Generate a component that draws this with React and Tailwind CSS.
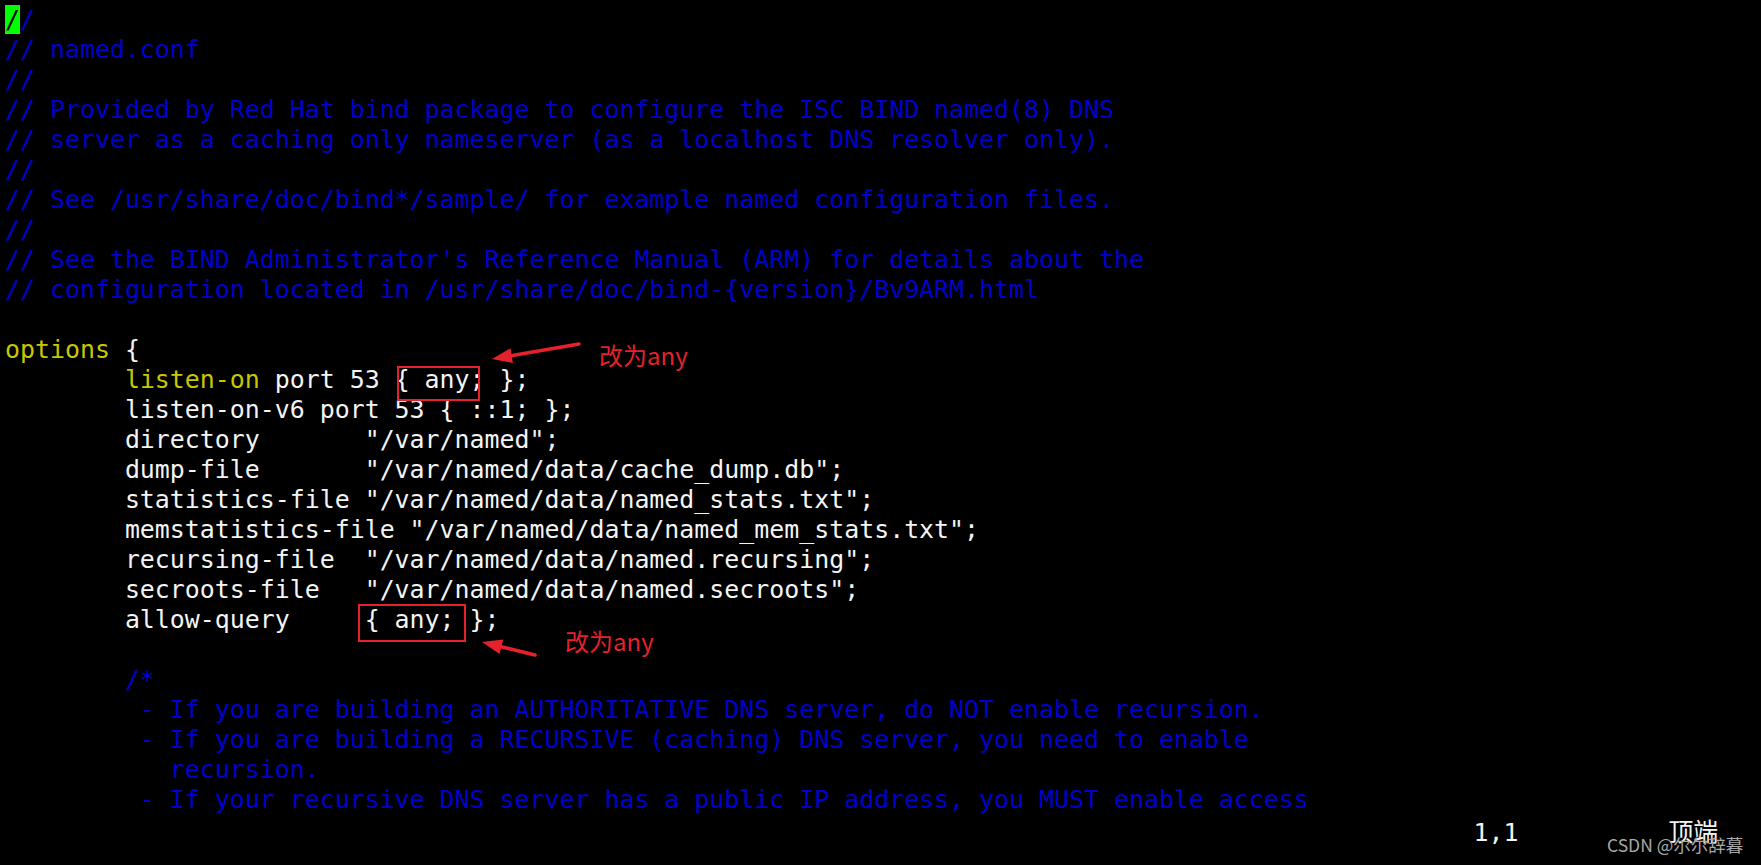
import React from "react";

const B = "text-[#0000cd]";
const Y = "text-[#c8c800]";
const W = "text-[#f4f4f4]";

const lines = [
  [["//", B, true]],
  [["// named.conf", B]],
  [["//", B]],
  [["// Provided by Red Hat bind package to configure the ISC BIND named(8) DNS", B]],
  [["// server as a caching only nameserver (as a localhost DNS resolver only).", B]],
  [["//", B]],
  [["// See /usr/share/doc/bind*/sample/ for example named configuration files.", B]],
  [["//", B]],
  [["// See the BIND Administrator's Reference Manual (ARM) for details about the", B]],
  [["// configuration located in /usr/share/doc/bind-{version}/Bv9ARM.html", B]],
  [["", W]],
  [["options", Y], [" {", W]],
  [["        ", W], ["listen-on", Y], [" port 53 { any; };", W]],
  [["        listen-on-v6 port 53 { ::1; };", W]],
  [['        directory       "/var/named";', W]],
  [['        dump-file       "/var/named/data/cache_dump.db";', W]],
  [['        statistics-file "/var/named/data/named_stats.txt";', W]],
  [['        memstatistics-file "/var/named/data/named_mem_stats.txt";', W]],
  [['        recursing-file  "/var/named/data/named.recursing";', W]],
  [['        secroots-file   "/var/named/data/named.secroots";', W]],
  [["        allow-query     { any; };", W]],
  [["", W]],
  [["        /*", B]],
  [["         - If you are building an AUTHORITATIVE DNS server, do NOT enable recursion.", B]],
  [["         - If you are building a RECURSIVE (caching) DNS server, you need to enable", B]],
  [["           recursion.", B]],
  [["         - If your recursive DNS server has a public IP address, you MUST enable access", B]],
];

function Line({ segs }) {
  return (
    <div className="h-[30px] whitespace-pre">
      {segs.map(([t, c, cursor], i) =>
        cursor ? (
          <span key={i} className={c}>
            <span className="bg-[#00ff00] text-black">{t[0]}</span>
            {t.slice(1)}
          </span>
        ) : (
          <span key={i} className={c}>
            {t}
          </span>
        )
      )}
    </div>
  );
}

export default function App() {
  return (
    <div className="relative w-[1761px] h-[865px] bg-black overflow-hidden">
      <div className="pt-[5px] pl-[5px] font-['DejaVu_Sans_Mono',monospace] text-[24.9px] leading-[30px]">
        {lines.map((segs, i) => (
          <Line key={i} segs={segs} />
        ))}
        <div className="h-[30px] whitespace-pre text-[#f4f4f4]">
          {" ".repeat(98)}
          <span>1,1</span>
          {" ".repeat(10)}
          <span className="font-['Noto_Sans_CJK_SC',serif]">顶端</span>
        </div>
      </div>

      {/* annotation boxes */}
      <div className="absolute left-[397px] top-[366px] w-[83px] h-[35px] border-2 border-[#e5222b]" />
      <div className="absolute left-[358px] top-[604px] w-[108px] h-[38px] border-2 border-[#e5222b]" />

      {/* arrows */}
      <svg className="absolute left-0 top-0" width="1761" height="865" viewBox="0 0 1761 865">
        <line x1="579" y1="344" x2="511" y2="355.7" stroke="#e5222b" strokeWidth="3.5" strokeLinecap="round" />
        <polygon points="492,359 510.5,348.2 512.9,363" fill="#e5222b" />
        <line x1="535" y1="655" x2="501" y2="646.7" stroke="#e5222b" strokeWidth="3.5" strokeLinecap="round" />
        <polygon points="482,642 503.3,639.5 499.5,654.1" fill="#e5222b" />
      </svg>

      {/* annotation texts */}
      <div className="absolute left-[599px] top-[337px] text-[24px] leading-[36px] text-[#e5222b] font-['Noto_Sans_CJK_SC',sans-serif]">
        改为any
      </div>
      <div className="absolute left-[565px] top-[623px] text-[24px] leading-[36px] text-[#e5222b] font-['Noto_Sans_CJK_SC',sans-serif]">
        改为any
      </div>

      {/* watermark */}
      <div className="absolute left-[1607px] top-[833px] text-[17.5px] leading-[24px] text-[#a8a8a8] font-['Noto_Sans_CJK_SC',sans-serif] whitespace-nowrap">
        CSDN @尔尔辞暮
      </div>
    </div>
  );
}
